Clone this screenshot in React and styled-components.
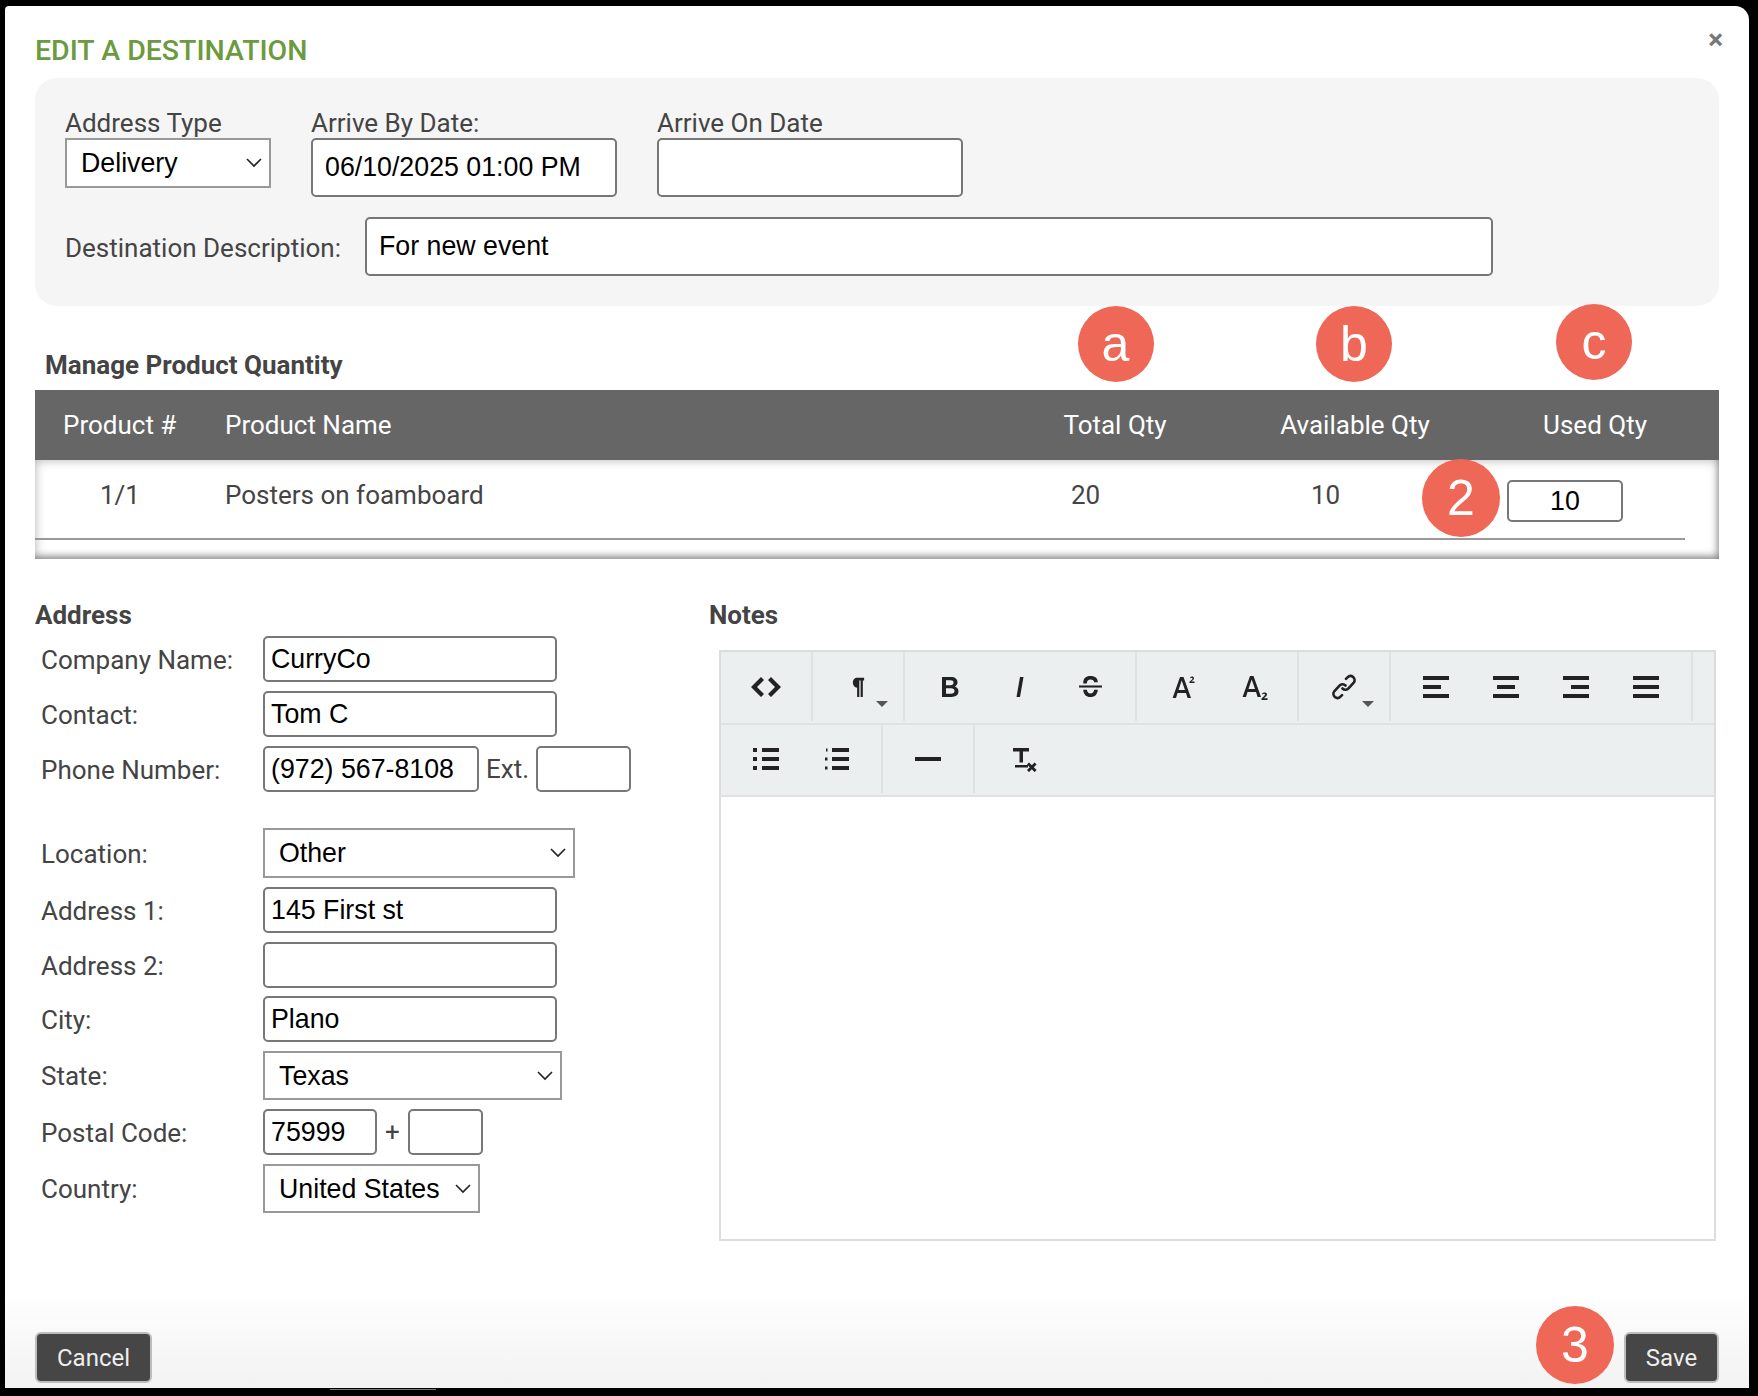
import React from 'react';
import styled, { createGlobalStyle } from 'styled-components';

const GlobalStyle = createGlobalStyle`
  html, body {
    margin: 0;
    padding: 0;
    background: #000;
  }
  body {
    font-family: Roboto, "Liberation Sans", sans-serif;
  }
  * {
    box-sizing: border-box;
  }
`;

const Modal = styled.div`
  position: relative;
  width: 1744px;
  height: 1382px;
  margin: 6px 0 8px 5px;
  padding: 0 30px 5px 30px;
  background: linear-gradient(to bottom, #fff 93%, #f2f2f2 100%);
  border-radius: 4px 14px 0 0;
  display: flex;
  flex-direction: column;

  /* strip of the window behind the modal */
  &::before {
    content: '';
    position: absolute;
    z-index: -1;
    top: 0;
    bottom: 0;
    right: -3px;
    width: 17px;
    background: linear-gradient(
      to bottom,
      #777 0, #777 47px,
      #111 47px, #111 123px,
      #666 123px, #666 475px,
      #111 475px, #111 564px,
      #666 564px, #666 982px,
      #111 982px, #111 1031px,
      #666 1031px, #666 1062px,
      #222 1062px, #222 1151px,
      #555 1151px, #555 100%
    );
  }
`;

const Close = styled.div`
  position: absolute;
  top: 20px;
  right: 26px;
  font-size: 28px;
  line-height: 28px;
  font-weight: 700;
  color: #777;
`;

const Title = styled.h1`
  margin: 0;
  height: 72px;
  padding-top: 30px;
  font-size: 28.500px;
  line-height: 30px;
  font-weight: 500;
  color: #6b9a3f;
  text-transform: uppercase;
`;

const Panel = styled.div`
  height: 228px;
  padding: 31px 30px 0;
  background: #f5f5f5;
  border-radius: 22px;
  display: flex;
  flex-direction: column;
  gap: 20px;
`;

const PanelRow = styled.div`
  display: flex;
  gap: ${(p) => p.$gap || 40}px;
  align-items: ${(p) => p.$align || 'flex-start'};
`;

const Field = styled.label`
  display: flex;
  flex-direction: column;
`;

const Label = styled.span`
  font-size: 26px;
  line-height: 29px;
  color: #444;
  padding-top: ${(p) => p.$offset || 0}px;
`;

const Input = styled.input`
  display: block;
  width: ${(p) => p.$w}px;
  height: ${(p) => p.$h || 46}px;
  padding: 0 ${(p) => p.$pad ?? 6}px;
  border: 2px solid #777;
  border-radius: 5px;
  background: #fff;
  color: #000;
  font-family: "Liberation Sans", Arial, sans-serif;
  font-size: 26.750px;
  text-align: ${(p) => p.$center ? 'center' : 'left'};
  outline: none;
`;

const SelectWrap = styled.div`
  position: relative;
  width: ${(p) => p.$w}px;
  height: ${(p) => p.$h || 50}px;
`;

const Select = styled.select`
  appearance: none;
  display: block;
  width: 100%;
  height: 100%;
  padding: 0 0 0 14px;
  border: 2px solid #999;
  border-radius: 0;
  background: #fff;
  color: #000;
  font-family: "Liberation Sans", Arial, sans-serif;
  font-size: 26.750px;
  outline: none;
`;

const Chevron = styled.svg`
  position: absolute;
  right: 9px;
  top: 20px;
  width: 16px;
  height: 10px;
  fill: none;
  stroke: #222;
  stroke-width: 1.6;
  pointer-events: none;
`;

const Section = styled.h2`
  margin: 0;
  font-size: 26px;
  line-height: 30px;
  font-weight: 700;
  color: #444;
`;

const TableHead = styled.div`
  padding: 44px 0 0 10px;
  height: 84px;
`;

const HeadRow = styled.div`
  display: grid;
  grid-template-columns: 190px 1fr 240px 240px 240px;
  align-items: center;
  height: 70px;
  padding-right: 4px;
  background: #666;
  color: #fff;
  font-size: 26px;
`;

const TableBody = styled.div`
  height: 99px;
  background: #fff;
  box-shadow: inset 0 0 11px rgba(0, 0, 0, 0.3), inset -3px -5px 6px -2px rgba(0, 0, 0, 0.3);
`;

const Cell = styled.div`
  padding-left: ${(p) => p.$pad || 0}px;
  text-align: ${(p) => p.$center ? 'center' : 'left'};
`;

const BodyRow = styled.div`
  display: grid;
  grid-template-columns: 190px 1fr 240px 240px 240px;
  height: 80px;
  margin-right: 34px;
  border-bottom: 2px solid #999;
  color: #444;
  font-size: 26px;
  line-height: 70px;
`;

const UsedInput = styled(Input)`
  margin-top: 20px;
  margin-left: 62px;
`;

const Columns = styled.div`
  display: grid;
  grid-template-columns: 674px 1fr;
  padding-top: 41px;
`;

const AddressCol = styled.div`
  display: flex;
  flex-direction: column;
`;

const FormRow = styled.div`
  display: grid;
  grid-template-columns: 222px 1fr;
  align-items: center;
  margin-top: ${(p) => p.$top ?? 9}px;
  padding-left: 6px;
`;

const Inline = styled.div`
  display: flex;
  align-items: center;
  gap: ${(p) => p.$gap || 7}px;
  color: #444;
  font-size: 26px;
`;

const NotesCol = styled.div`
  display: flex;
  flex-direction: column;
`;

const Editor = styled.div`
  width: 997px;
  height: 591px;
  margin: 20px 0 0 10px;
  border: 2px solid #ddd;
  background: #fff;
`;

const Toolbar = styled.div`
  height: ${(p) => p.$h}px;
  display: flex;
  align-items: stretch;
  background: #ebeff0;
  border-bottom: 2px solid #dde3e3;
`;

const Group = styled.div`
  position: relative;
  display: flex;
  gap: ${(p) => p.$gap || 0}px;
  padding: 0 ${(p) => p.$right ?? 10}px 0 ${(p) => p.$left ?? 10}px;
  border-right: ${(p) => p.$last ? 'none' : '2px solid #dde3e3'};
  margin-bottom: 2px;
`;

const ToolButton = styled.div`
  position: relative;
  width: 70px;
  display: flex;
  align-items: center;
  justify-content: center;
  color: #222;
`;

const Caret = styled.span`
  position: absolute;
  right: 5px;
  bottom: 14px;
  border-left: 6px solid transparent;
  border-right: 6px solid transparent;
  border-top: 6px solid #555;
`;

const Footer = styled.div`
  margin-top: auto;
  display: flex;
  justify-content: space-between;
`;

const Button = styled.button`
  height: 51px;
  width: ${(p) => p.$w}px;
  border: 2px solid #bdbdbd;
  border-radius: 6px;
  background: #464646;
  color: #eee;
  font-family: Roboto, sans-serif;
  font-size: 24px;
`;

const Badge = styled.div`
  position: absolute;
  left: ${(p) => p.$x - p.$d / 2}px;
  top: ${(p) => p.$y - p.$d / 2}px;
  width: ${(p) => p.$d}px;
  height: ${(p) => p.$d}px;
  border-radius: 50%;
  background: #ef6757;
  color: #fff;
  font-family: "Liberation Sans", Arial, sans-serif;
  font-size: 50px;
  display: flex;
  align-items: center;
  justify-content: center;
`;

const HomeBar = styled.div`
  position: absolute;
  left: 325px;
  bottom: -2px;
  width: 106px;
  height: 1px;
  background: #777;
`;

const Icon = ({ children, w = 32, h = 28, vb }) => (
  <svg width={w} height={h} viewBox={vb || `0 0 ${w} ${h}`} fill="currentColor">{children}</svg>
);

const SelectField = ({ w, h, value }) => (
  <SelectWrap $w={w} $h={h}>
    <Select defaultValue={value}><option>{value}</option></Select>
    <Chevron viewBox="0 0 16 10"><path d="M1 1l7 7 7-7" /></Chevron>
  </SelectWrap>
);

const AlignIcon = ({ width, x }) => (
  <Icon w={26} h={22}>
    <rect x="0" y="0" width="26" height="4" />
    <rect x={x} y="9" width={width} height="4" />
    <rect x="0" y="18" width="26" height="4" />
  </Icon>
);

const ListRows = () => (
  <>
    <rect x="9" y="0" width="17" height="4" />
    <rect x="9" y="9" width="17" height="4" />
    <rect x="9" y="18" width="17" height="4" />
  </>
);

export default function App() {
  return (
    <>
      <GlobalStyle />
      <Modal>
        <Close>×</Close>
        <Title>Edit a Destination</Title>
        <Panel>
          <PanelRow>
            <Field>
              <Label>Address Type</Label>
              <SelectField w={206} value="Delivery" />
            </Field>
            <Field>
              <Label>Arrive By Date:</Label>
              <Input $w={306} $h={59} $pad={12} readOnly value="06/10/2025 01:00 PM" />
            </Field>
            <Field>
              <Label>Arrive On Date</Label>
              <Input $w={306} $h={59} readOnly value="" />
            </Field>
          </PanelRow>
          <PanelRow $gap={24} $align="center">
            <Label $offset={4}>Destination Description:</Label>
            <Input $w={1128} $h={59} $pad={12} readOnly value="For new event" />
          </PanelRow>
        </Panel>

        <TableHead><Section>Manage Product Quantity</Section></TableHead>
        <HeadRow>
          <Cell $pad={28}>Product #</Cell>
          <Cell>Product Name</Cell>
          <Cell $center>Total Qty</Cell>
          <Cell $center>Available Qty</Cell>
          <Cell $center>Used Qty</Cell>
        </HeadRow>
        <TableBody>
          <BodyRow>
            <Cell $pad={65}>1/1</Cell>
            <Cell>Posters on foamboard</Cell>
            <Cell $pad={106}>20</Cell>
            <Cell $pad={106}>10</Cell>
            <div><UsedInput $w={116} $h={42} $center readOnly value="10" /></div>
          </BodyRow>
        </TableBody>

        <Columns>
          <AddressCol>
            <Section>Address</Section>
            <FormRow $top={6}><Label $offset={2}>Company Name:</Label><Input $w={294} readOnly value="CurryCo" /></FormRow>
            <FormRow><Label $offset={2}>Contact:</Label><Input $w={294} readOnly value="Tom C" /></FormRow>
            <FormRow>
              <Label $offset={2}>Phone Number:</Label>
              <Inline>
                <Input $w={216} readOnly value="(972) 567-8108" />
                Ext.
                <Input $w={95} readOnly value="" />
              </Inline>
            </FormRow>
            <FormRow $top={36}><Label $offset={2}>Location:</Label><SelectField w={312} value="Other" /></FormRow>
            <FormRow><Label $offset={2}>Address 1:</Label><Input $w={294} readOnly value="145 First st" /></FormRow>
            <FormRow><Label $offset={2}>Address 2:</Label><Input $w={294} readOnly value="" /></FormRow>
            <FormRow $top={8}><Label $offset={2}>City:</Label><Input $w={294} readOnly value="Plano" /></FormRow>
            <FormRow><Label $offset={2}>State:</Label><SelectField w={299} h={49} value="Texas" /></FormRow>
            <FormRow>
              <Label $offset={2}>Postal Code:</Label>
              <Inline $gap={8}>
                <Input $w={114} readOnly value="75999" />
                +
                <Input $w={75} readOnly value="" />
              </Inline>
            </FormRow>
            <FormRow><Label $offset={2}>Country:</Label><SelectField w={217} h={49} value="United States" /></FormRow>
          </AddressCol>
          <NotesCol>
            <Section>Notes</Section>
            <Editor>
              <Toolbar $h={73}>
                <Group>
                  <ToolButton>
                    <Icon w={32} h={22}>
                      <path d="M11 1l3 3-7 7 7 7-3 3L1 11zM21 1l-3 3 7 7-7 7 3 3 10-10z" />
                    </Icon>
                  </ToolButton>
                </Group>
                <Group>
                  <ToolButton>
                    <Icon w={14} h={21} vb="0 0 16 24">
                      <path d="M6 2h9v3h-1.500v19H11V5H9.500v19H7V13.500a6 6 0 0 1-1-11.500z" />
                    </Icon>
                    <Caret />
                  </ToolButton>
                </Group>
                <Group $right={10}>
                  <ToolButton>
                    <Icon w={18} h={22}>
                      <path fillRule="evenodd" d="M1 1h9c4 0 6.500 2 6.500 5.200 0 2-1 3.500-2.700 4.300 2.200.7 3.700 2.500 3.700 4.800 0 3.600-2.800 5.700-7 5.700H1zm4 3.300v4.900h4.500c2 0 3-.9 3-2.500s-1-2.400-3-2.400zm0 8v5.400h5c2.200 0 3.500-1 3.500-2.700s-1.300-2.700-3.500-2.700z" />
                    </Icon>
                  </ToolButton>
                  <ToolButton>
                    <Icon w={12} h={22}><path d="M6 1h3.500L6 21H2.500z" /></Icon>
                  </ToolButton>
                  <ToolButton>
                    <Icon w={25} h={25} vb="0 0 24 24">
                      <rect x="1" y="11" width="22" height="2" />
                      <path d="M5 9c0-5 2.500-7 7-7s7 2 7 6h-3.500c-.2-1.800-1.300-2.700-3.500-2.700S8.500 6.500 8.500 9zM5 15h3.500c.3 2.300 1.500 3.700 3.500 3.700s3.200-1.400 3.500-3.700H19c-.3 4.500-2.800 7-7 7s-6.700-2.500-7-7z" />
                    </Icon>
                  </ToolButton>
                </Group>
                <Group $left={12} $gap={2} $right={6}>
                  <ToolButton>
                    <Icon w={24} h={24}>
                      <path d="M8 2h3.500L19 23h-3.400l-1.600-5H5.500L4 23H.6zm-1.500 13h6.500L9.700 5.500z" />
                      <path d="M18 2.500c1.500-1.500 4-1 4 .8 0 1.300-1.500 2-2.800 3.200H22.500V8H17.500V6.700c1.500-1.500 3-2.300 3-3.300 0-.9-1.300-.9-2-.1z" />
                    </Icon>
                  </ToolButton>
                  <ToolButton>
                    <Icon w={28} h={26}>
                      <path d="M8 2h3.500L19 23h-3.400l-1.600-5H5.500L4 23H.6zm-1.500 13h6.500L9.700 5.500z" />
                      <path d="M20 19.500c1.500-1.500 5-1.300 5 1 0 1.500-2 2.600-3.200 3.800H25.500V26H19.500V24.500c2-2 3.500-2.800 3.500-4 0-1-1.700-1-2.500 0z" />
                    </Icon>
                  </ToolButton>
                </Group>
                <Group>
                  <ToolButton>
                    <Icon w={28} h={28}>
                      <g fill="none" stroke="currentColor" strokeWidth="2.600" strokeLinecap="round">
                        <path d="M12.500 15.500c2 2 4.500 1.500 6-.2l5-5.300c1.700-2 1.300-4.500-.4-6-1.800-1.500-4-1.300-5.600.3l-1.500 1.500" />
                        <path d="M15.500 12.500c-2-2-4.500-1.500-6 .2l-5 5.300c-1.700 2-1.300 4.500.4 6 1.800 1.500 4 1.300 5.600-.3l1.500-1.500" />
                      </g>
                    </Icon>
                    <Caret />
                  </ToolButton>
                </Group>
                <Group>
                  <ToolButton><AlignIcon width={18} x={0} /></ToolButton>
                  <ToolButton><AlignIcon width={18} x={4} /></ToolButton>
                  <ToolButton><AlignIcon width={18} x={8} /></ToolButton>
                  <ToolButton><AlignIcon width={26} x={0} /></ToolButton>
                </Group>
              </Toolbar>
              <Toolbar $h={72}>
                <Group>
                  <ToolButton>
                    <Icon w={26} h={22}>
                      <ListRows />
                      <rect x="0" y="0" width="4" height="4" />
                      <rect x="0" y="9" width="4" height="4" />
                      <rect x="0" y="18" width="4" height="4" />
                    </Icon>
                  </ToolButton>
                  <ToolButton>
                    <Icon w={26} h={22}>
                      <ListRows />
                      <rect x="3" y="0.500" width="1.500" height="3" />
                      <rect x="2" y="9.500" width="2.500" height="3" />
                      <rect x="2" y="18.500" width="2.500" height="3" />
                    </Icon>
                  </ToolButton>
                </Group>
                <Group>
                  <ToolButton>
                    <Icon w={26} h={4}><rect x="0" y="0" width="26" height="4" /></Icon>
                  </ToolButton>
                </Group>
                <Group $left={15} $last>
                  <ToolButton>
                    <Icon w={26} h={25}>
                      <path d="M1 1h16v3.500h-6v11H7.500v-11H1zM3 18h13v2.500H3zM17 15.500l2.800 2.800 2.800-2.800 2 2-2.800 2.800 2.800 2.800-2 2-2.800-2.800-2.800 2.800-2-2 2.800-2.800-2.800-2.800z" />
                    </Icon>
                  </ToolButton>
                </Group>
              </Toolbar>
            </Editor>
          </NotesCol>
        </Columns>

        <Footer>
          <Button $w={117}>Cancel</Button>
          <Button $w={95}>Save</Button>
        </Footer>

        <Badge $x={1110.500} $y={338} $d={76}>a</Badge>
        <Badge $x={1349} $y={338} $d={76}>b</Badge>
        <Badge $x={1589} $y={336} $d={76}>c</Badge>
        <Badge $x={1456} $y={492} $d={78}>2</Badge>
        <Badge $x={1570} $y={1339} $d={78}>3</Badge>
        <HomeBar />
      </Modal>
    </>
  );
}
